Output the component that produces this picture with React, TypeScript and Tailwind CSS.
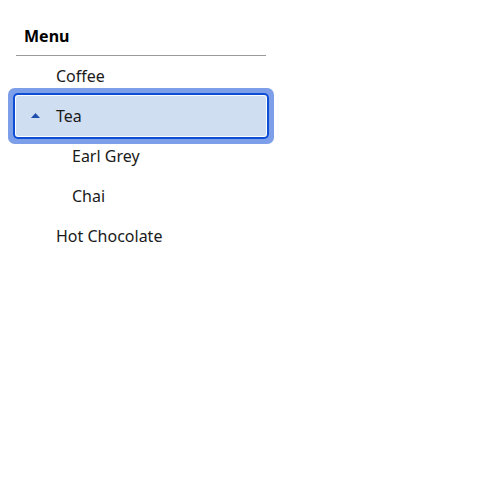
import React from "react";

type Item = { label: string; depth: number; expanded?: boolean; focused?: boolean };

const items: Item[] = [
  { label: "Coffee", depth: 1 },
  { label: "Tea", depth: 1, expanded: true, focused: true },
  { label: "Earl Grey", depth: 2 },
  { label: "Chai", depth: 2 },
  { label: "Hot Chocolate", depth: 1 },
];

const App = () => {
  return (
    <div className="p-4 font-['Noto_Sans',sans-serif] text-[#1a1a1a]">
      <div className="w-[250px]">
        {/* Heading */}
        <div className="h-10 pl-[8px] flex items-center text-base font-bold text-black border-b border-[#9a9a9a]">
          Menu
        </div>

        {/* Tree */}
        <ul role="tree">
          {items.map((item) => (
            <li
              key={item.label}
              role="treeitem"
              className={
                item.focused
                  ? "relative h-10 flex items-center rounded-[2px] bg-[#d0def2] shadow-[0_0_0_1px_#ffffff,0_0_0_3px_#0d4fd4,0_0_0_8px_#7d9ee8]"
                  : "h-10 flex items-center"
              }
            >
              {item.expanded && (
                <svg
                  className="absolute left-[15px] top-[17px]"
                  width="9"
                  height="5"
                  viewBox="0 0 9 5"
                >
                  <polygon points="4.5,0 9,5 0,5" fill="#1f4fae" />
                </svg>
              )}
              <span className={item.depth === 2 ? "pl-14 text-base" : "pl-10 text-base"}>
                {item.label}
              </span>
            </li>
          ))}
        </ul>
      </div>
    </div>
  );
};

export default App;
